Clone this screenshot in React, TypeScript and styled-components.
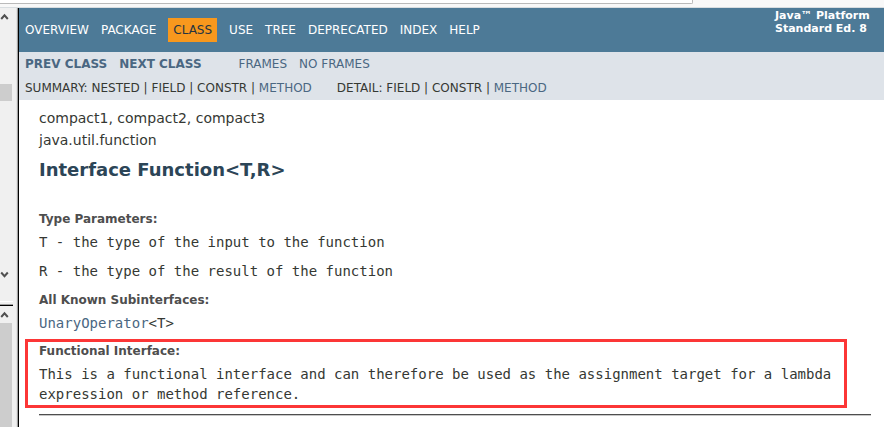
import React from "react";
import styled, { createGlobalStyle } from "styled-components";

const GlobalStyle = createGlobalStyle`
  * { box-sizing: border-box; }
  body {
    margin: 0;
    background: #fff;
    color: #353833;
    font: 14px/20px "DejaVu Sans", sans-serif;
  }
  a { color: #4a6782; text-decoration: none; }
  ul, dl, dd, h2 { margin: 0; padding: 0; }
`;

const Window = styled.div`
  display: flex;
  flex-direction: column;
  height: 100vh;
  overflow: hidden;
`;

const Chrome = styled.div`
  flex: none;
  height: 8px;
  background: #f8f8f8;
  border-bottom: 1px solid #d8dde0;
`;

const AddressEdge = styled.div`
  width: 78.4%;
  height: 4px;
  background: #fff;
  border: solid #bababa;
  border-width: 0 1px 1px 0;
  border-radius: 0 0 2px 0;
`;

const Frames = styled.div`
  flex: 1;
  min-height: 0;
  display: flex;
`;

const Sidebar = styled.aside`
  flex: none;
  width: 19px;
  display: flex;
  flex-direction: column;
  background: #f0f0f0;
  border-right: 1px solid #000;
  box-shadow: inset -1px 0 #a0a0a0, inset -2px 0 #e3e3e3;
`;

const Scrollbar = styled.div<{ $grow: number; $end?: number }>`
  flex: ${(p) => p.$grow} 1 0;
  min-height: 0;
  width: 13px;
  padding-bottom: ${(p) => p.$end ?? 0}px;
  display: flex;
  flex-direction: column;
`;

const Divider = styled.div`
  flex: none;
  width: 13px;
  height: 5px;
  border-top: 1px solid #fff;
  border-bottom: 1px solid #000;
  box-shadow: inset 0 -1px #a0a0a0;
`;

const ArrowButton = styled.button`
  flex: none;
  width: 12px;
  height: 17px;
  padding: 0;
  border: 0;
  background: #f0f0f0;
  svg { display: block; }
`;

const Track = styled.div`
  flex: 1;
  min-height: 0;
  display: flex;
  flex-direction: column;
`;

const Thumb = styled.div<{ $before?: number; $size?: number }>`
  flex: ${(p) => (p.$size ? `0 0 ${p.$size}px` : "1")};
  width: 12px;
  margin-top: ${(p) => p.$before ?? 0}px;
  background: #cdcdcd;
`;

const Page = styled.main`
  flex: 1;
  min-width: 0;
  overflow: hidden;
`;

const TopNav = styled.nav`
  display: flex;
  justify-content: space-between;
  height: 44px;
  padding: 0 13px 0 6px;
  background: #4d7a97;
  color: #fff;
  font-size: 12px;
`;

const NavList = styled.ul`
  display: flex;
  gap: 12px;
  align-items: center;
  list-style: none;
`;

const NavItem = styled.li<{ $active?: boolean }>`
  padding: ${(p) => (p.$active ? "2px 5px" : "2px 0")};
  background: ${(p) => (p.$active ? "#f8981d" : "transparent")};
  color: ${(p) => (p.$active ? "#253441" : "#fff")};
  a { color: inherit; }
`;

const Edition = styled.div`
  flex: none;
  width: 96px;
  padding-top: 1px;
  font-size: 11px;
  line-height: 13px;
  font-weight: bold;
  white-space: nowrap;
`;

const SubNav = styled.div`
  padding: 0 6px;
  background: #dee3e9;
  font-size: 12px;
  line-height: 24px;
`;

const SubRow = styled.div<{ $gap: number }>`
  display: flex;
  gap: ${(p) => p.$gap}px;
`;

const Group = styled.div<{ $bold?: boolean }>`
  display: flex;
  gap: 12px;
  font-weight: ${(p) => (p.$bold ? "bold" : "normal")};
`;

const Content = styled.div`
  padding: 8px 13px 0 20px;
`;

const SubTitle = styled.div`
  padding-bottom: 2px;
`;

const Title = styled.h2`
  margin: 6px 0 27px;
  color: #2c4557;
  font-size: 18px;
  line-height: 24px;
`;

const Term = styled.dt`
  color: #4e4e4e;
  font-size: 12px;
  font-weight: bold;
  line-height: 20px;
`;

const Definition = styled.dd`
  font-family: "DejaVu Sans Mono", monospace;
`;

const Details = styled.dl`
  ${Definition} {
    padding: 3px 0 6px;
  }
  & + & {
    margin-top: 3px;
  }
`;

const Highlight = styled.dl`
  margin: 0 24px 6px -14px;
  padding: 0 11px 1px;
  border: 3px solid #fc3636;
  ${Term} {
    line-height: 18px;
  }
  ${Definition} {
    padding-top: 4px;
  }
`;

const Rule = styled.hr`
  margin: 0;
  border: 0;
  height: 2px;
  background: #4e4e4e;
  border-bottom: 1px solid #c8c8c8;
`;

const links = ["OVERVIEW", "PACKAGE", "CLASS", "USE", "TREE", "DEPRECATED", "INDEX", "HELP"];

function Arrow({ down }: { down?: boolean }) {
  return (
    <ArrowButton aria-label={down ? "Scroll down" : "Scroll up"}>
      <svg width="12" height="17" viewBox="0 0 12 17">
        <path
          d={down ? "M1.2 6.5 4.5 10.2 7.8 6.5" : "M1.2 11 4.5 7.3 7.8 11"}
          fill="none"
          stroke="#505050"
          strokeWidth="2"
        />
      </svg>
    </ArrowButton>
  );
}

export default function App() {
  return (
    <Window>
      <GlobalStyle />
      <Chrome>
        <AddressEdge />
      </Chrome>
      <Frames>
        <Sidebar>
          <Scrollbar $grow={275} $end={18}>
            <Arrow />
            <Track>
              <Thumb $before={59} $size={17} />
            </Track>
            <Arrow down />
          </Scrollbar>
          <Divider />
          <Scrollbar $grow={121}>
            <Arrow />
            <Track>
              <Thumb />
            </Track>
          </Scrollbar>
        </Sidebar>
        <Page>
          <TopNav>
            <NavList>
              {links.map((name) => (
                <NavItem key={name} $active={name === "CLASS"}>
                  {name === "CLASS" ? name : <a href="#">{name}</a>}
                </NavItem>
              ))}
            </NavList>
            <Edition>
              Java™ Platform
              <br />
              Standard Ed. 8
            </Edition>
          </TopNav>
          <SubNav>
            <SubRow $gap={37}>
              <Group $bold>
                <a href="#">PREV CLASS</a>
                <a href="#">NEXT CLASS</a>
              </Group>
              <Group>
                <a href="#">FRAMES</a>
                <a href="#">NO FRAMES</a>
              </Group>
            </SubRow>
            <SubRow $gap={25}>
              <span>
                SUMMARY: NESTED | FIELD | CONSTR | <a href="#">METHOD</a>
              </span>
              <span>
                DETAIL: FIELD | CONSTR | <a href="#">METHOD</a>
              </span>
            </SubRow>
          </SubNav>
          <Content>
            <SubTitle>compact1, compact2, compact3</SubTitle>
            <SubTitle>java.util.function</SubTitle>
            <Title>Interface Function&lt;T,R&gt;</Title>
            <Details>
              <Term>Type Parameters:</Term>
              <Definition>T - the type of the input to the function</Definition>
              <Definition>R - the type of the result of the function</Definition>
            </Details>
            <Details>
              <Term>All Known Subinterfaces:</Term>
              <Definition>
                <a href="#">UnaryOperator</a>&lt;T&gt;
              </Definition>
            </Details>
            <Highlight>
              <Term>Functional Interface:</Term>
              <Definition>
                This is a functional interface and can therefore be used as the assignment target for a
                lambda expression or method reference.
              </Definition>
            </Highlight>
            <Rule />
          </Content>
        </Page>
      </Frames>
    </Window>
  );
}
